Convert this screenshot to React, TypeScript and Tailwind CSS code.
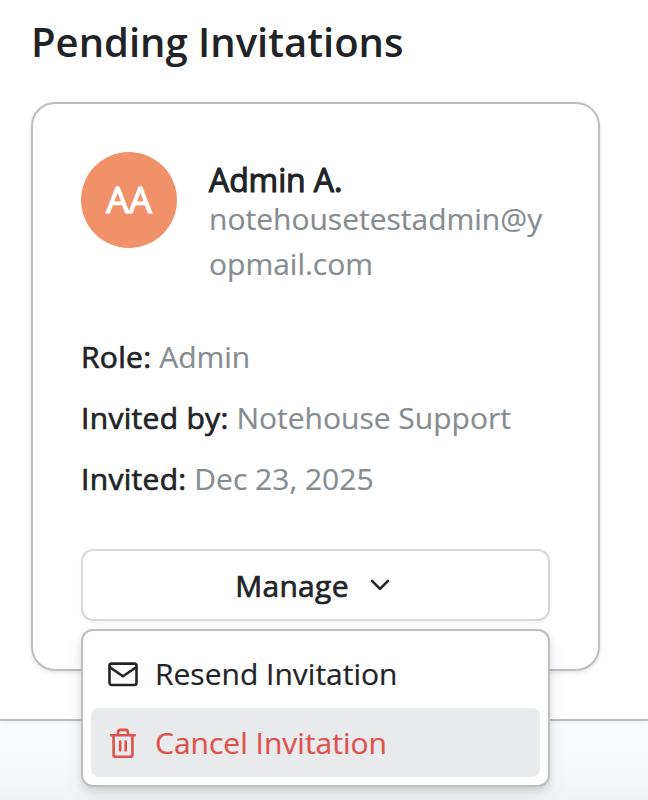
function MailIcon() {
  return (
    <svg className="size-8 shrink-0" viewBox="0 0 32 32" fill="none" stroke="currentColor" strokeWidth="2.6" strokeLinecap="round" strokeLinejoin="round">
      <rect x="2.5" y="5.6" width="27" height="21.4" rx="2.2" />
      <path d="M2.8 9.2 16 18.2 29.2 9.2" />
    </svg>
  );
}

function TrashIcon() {
  return (
    <svg className="size-8 shrink-0" viewBox="0 0 32 32" fill="none" stroke="currentColor" strokeWidth="2.6" strokeLinecap="round" strokeLinejoin="round">
      <path d="M4 8.3H27.8M6.6 8.3V27.7Q6.6 29.8 8.7 29.8H23.3Q25.4 29.8 25.4 27.7V8.3M11 8V5.2Q11 2.9 13.3 2.9H18.7Q21 2.9 21 5.2V8M13.2 14.5V23.5M18.7 14.5V23.5" />
    </svg>
  );
}

export default function App() {
  return (
    <div className="relative h-[800px] w-[648px] overflow-hidden bg-white font-['Open_Sans',sans-serif] text-[#212326]">
      <main className="relative z-10 flex h-[721px] flex-col border-b-2 border-[#bdbdc3] bg-white px-[31px] pt-[13px] shadow-[0_2px_4px_rgba(0,0,0,0.04)]">
        <h1 className="text-[40px] leading-[58px] font-semibold whitespace-nowrap">Pending Invitations</h1>
        <section className="mt-[31px] h-[569px] w-[569px] rounded-[24px] border-2 border-[#bdbdc3] bg-white px-12 pt-12 shadow-[0_2px_4px_rgba(0,0,0,0.1)]">
          <div className="flex gap-8">
            <div className="flex size-24 shrink-0 items-center justify-center rounded-full bg-[#f0916a] text-[36px] text-white [-webkit-text-stroke:1.2px_#fff]">AA</div>
            <div className="pt-2">
              <h2 className="text-[32px] leading-[40px] tracking-[-0.1px] whitespace-nowrap [-webkit-text-stroke:1.1px_#212326]">Admin A.</h2>
              <p className="-mt-1 w-[340px] text-[30px] leading-[45px] break-all text-[#868c90] [-webkit-text-stroke:0.2px_#868c90]">notehousetestadmin@yopmail.com</p>
            </div>
          </div>
          <div className="mt-12 flex flex-col gap-4 text-[30px] leading-[45px] text-[#868c90] [-webkit-text-stroke:0.2px_#868c90]">
            <p><b className="font-normal tracking-[0.3px] text-[#212326] [-webkit-text-stroke:0.7px_#212326]">Role:</b> Admin</p>
            <p><b className="font-normal tracking-[0.3px] text-[#212326] [-webkit-text-stroke:0.7px_#212326]">Invited by:</b> Notehouse Support</p>
            <p><b className="font-normal tracking-[0.3px] text-[#212326] [-webkit-text-stroke:0.7px_#212326]">Invited:</b> Dec 23, 2025</p>
          </div>
          <button className="mt-12 flex h-[72px] w-[469px] items-center justify-center rounded-xl border-2 border-[#d8d8da] pr-[5px] shadow-[0_2px_4px_rgba(0,0,0,0.05)]">
            <span className="text-[30px] tracking-[0.3px] [-webkit-text-stroke:0.7px_#212326]">Manage</span>
            <svg className="ml-5" width="22" height="22" viewBox="0 0 22 22" fill="none" stroke="currentColor" strokeWidth="2.6" strokeLinecap="round" strokeLinejoin="round"><path d="m3 6.8 8 8 8-8" /></svg>
          </button>
        </section>
      </main>
      <div className="h-[79px] bg-linear-to-b from-[#fafbfd] via-[#f8f9fb] to-[#f2f3f4]" />
      <div className="absolute top-[629px] left-[81px] z-20 h-[158px] w-[469px] rounded-xl border-2 border-[#bdbdc3] bg-white p-2 text-[30px] shadow-[0_4px_8px_rgba(0,0,0,0.12),0_10px_24px_rgba(0,0,0,0.05)] [-webkit-text-stroke:0.2px]">
        <div className="flex h-[69px] items-center gap-4 px-4"><MailIcon /><span>Resend Invitation</span></div>
        <div className="flex h-[69px] items-center gap-4 rounded-lg bg-[#e9eaec] px-4 text-[#de524c]"><TrashIcon /><span>Cancel Invitation</span></div>
      </div>
    </div>
  );
}
